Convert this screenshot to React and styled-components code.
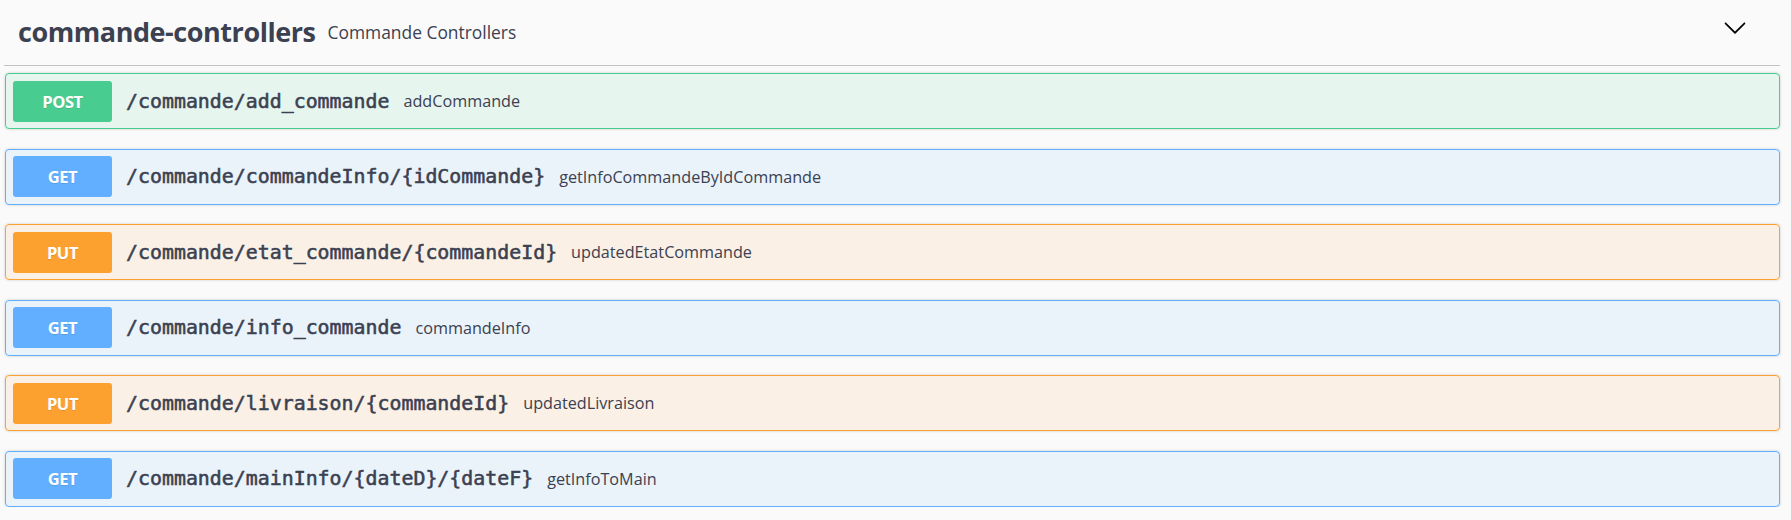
import React from "react";
import styled, { createGlobalStyle } from "styled-components";

const Global = createGlobalStyle`
  html, body { margin: 0; padding: 0; background: #fafafa; }
  body { font-family: "Open Sans", sans-serif; color: #3b4151; }
`;

const methodColors = {
  POST: "73,204,144",
  GET: "97,175,254",
  PUT: "252,161,48",
};

const Page = styled.div`
  width: 1776px;
  padding: 0 0 0 4px;
`;

const TagHeader = styled.div`
  display: flex;
  align-items: center;
  height: 65px;
  padding: 0 0 0 14px;
  border-bottom: 1px solid rgba(59, 65, 81, 0.3);
  box-sizing: content-box;
`;

const TagTitle = styled.span`
  font-family: "Open Sans", sans-serif;
  font-weight: 700;
  font-size: 27px;
  letter-spacing: -0.45px;
  color: #3b4151;
  margin-top: -2px;
`;

const TagDesc = styled.span`
  font-family: "Open Sans", sans-serif;
  font-size: 17.4px;
  color: #3b4151;
  margin-left: 12px;
  margin-top: -2px;
  flex: 1;
`;

const Toggle = styled.button`
  display: flex;
  align-items: center;
  justify-content: center;
  background: none;
  border: none;
  padding: 0;
  margin: 0 33px 10px 0;
  width: 24px;
  height: 24px;
  cursor: pointer;
`;

const List = styled.div`
  display: flex;
  flex-direction: column;
  gap: 19.6px;
  padding: 7px 0 0 1px;
`;

const Block = styled.div`
  display: flex;
  align-items: center;
  height: 56px;
  box-sizing: border-box;
  padding: 0 7px;
  border-radius: 4px;
  border: 1px solid rgb(${(p) => p.$rgb});
  background: rgba(${(p) => p.$rgb}, 0.1);
  box-shadow: 0 0 3px rgba(0, 0, 0, 0.19);
`;

const Method = styled.span`
  display: flex;
  align-items: center;
  justify-content: center;
  width: 99px;
  height: 41px;
  border-radius: 3px;
  background: rgb(${(p) => p.$rgb});
  color: #fff;
  font-family: "Open Sans", sans-serif;
  font-weight: 700;
  font-size: 16.5px;
  letter-spacing: -0.4px;
  text-shadow: 0 1px 0 rgba(0, 0, 0, 0.1);
`;

const Path = styled.span`
  font-family: "DejaVu Sans Mono", "Liberation Mono", monospace;
  font-weight: 400;
  font-size: 19.9px;
  -webkit-text-stroke: 0.55px #3b4151;
  color: #3b4151;
  margin-left: 14px;
`;

const Summary = styled.span`
  font-family: "Open Sans", sans-serif;
  font-size: 16.2px;
  color: #3b4151;
  margin-left: 14px;
`;

const ops = [
  { method: "POST", path: "/commande/add_commande", summary: "addCommande" },
  { method: "GET", path: "/commande/commandeInfo/{idCommande}", summary: "getInfoCommandeByIdCommande" },
  { method: "PUT", path: "/commande/etat_commande/{commandeId}", summary: "updatedEtatCommande" },
  { method: "GET", path: "/commande/info_commande", summary: "commandeInfo" },
  { method: "PUT", path: "/commande/livraison/{commandeId}", summary: "updatedLivraison" },
  { method: "GET", path: "/commande/mainInfo/{dateD}/{dateF}", summary: "getInfoToMain" },
];

export default function App() {
  return (
    <Page>
      <Global />
      <TagHeader>
        <TagTitle>commande-controllers</TagTitle>
        <TagDesc>Commande Controllers</TagDesc>
        <Toggle aria-label="collapse">
          <svg width="25" height="25" viewBox="0 0 20 20" fill="#000">
            <path d="M17.418 6.109c.272-.268.709-.268.979 0s.271.701 0 .969l-7.908 7.83c-.27.268-.707.268-.979 0l-7.908-7.83c-.27-.268-.27-.701 0-.969.271-.268.709-.268.979 0L10 13.25l7.418-7.141z" />
          </svg>
        </Toggle>
      </TagHeader>
      <List>
        {ops.map((op, i) => (
          <Block key={i} $rgb={methodColors[op.method]}>
            <Method $rgb={methodColors[op.method]}>{op.method}</Method>
            <Path>{op.path}</Path>
            <Summary>{op.summary}</Summary>
          </Block>
        ))}
      </List>
    </Page>
  );
}
